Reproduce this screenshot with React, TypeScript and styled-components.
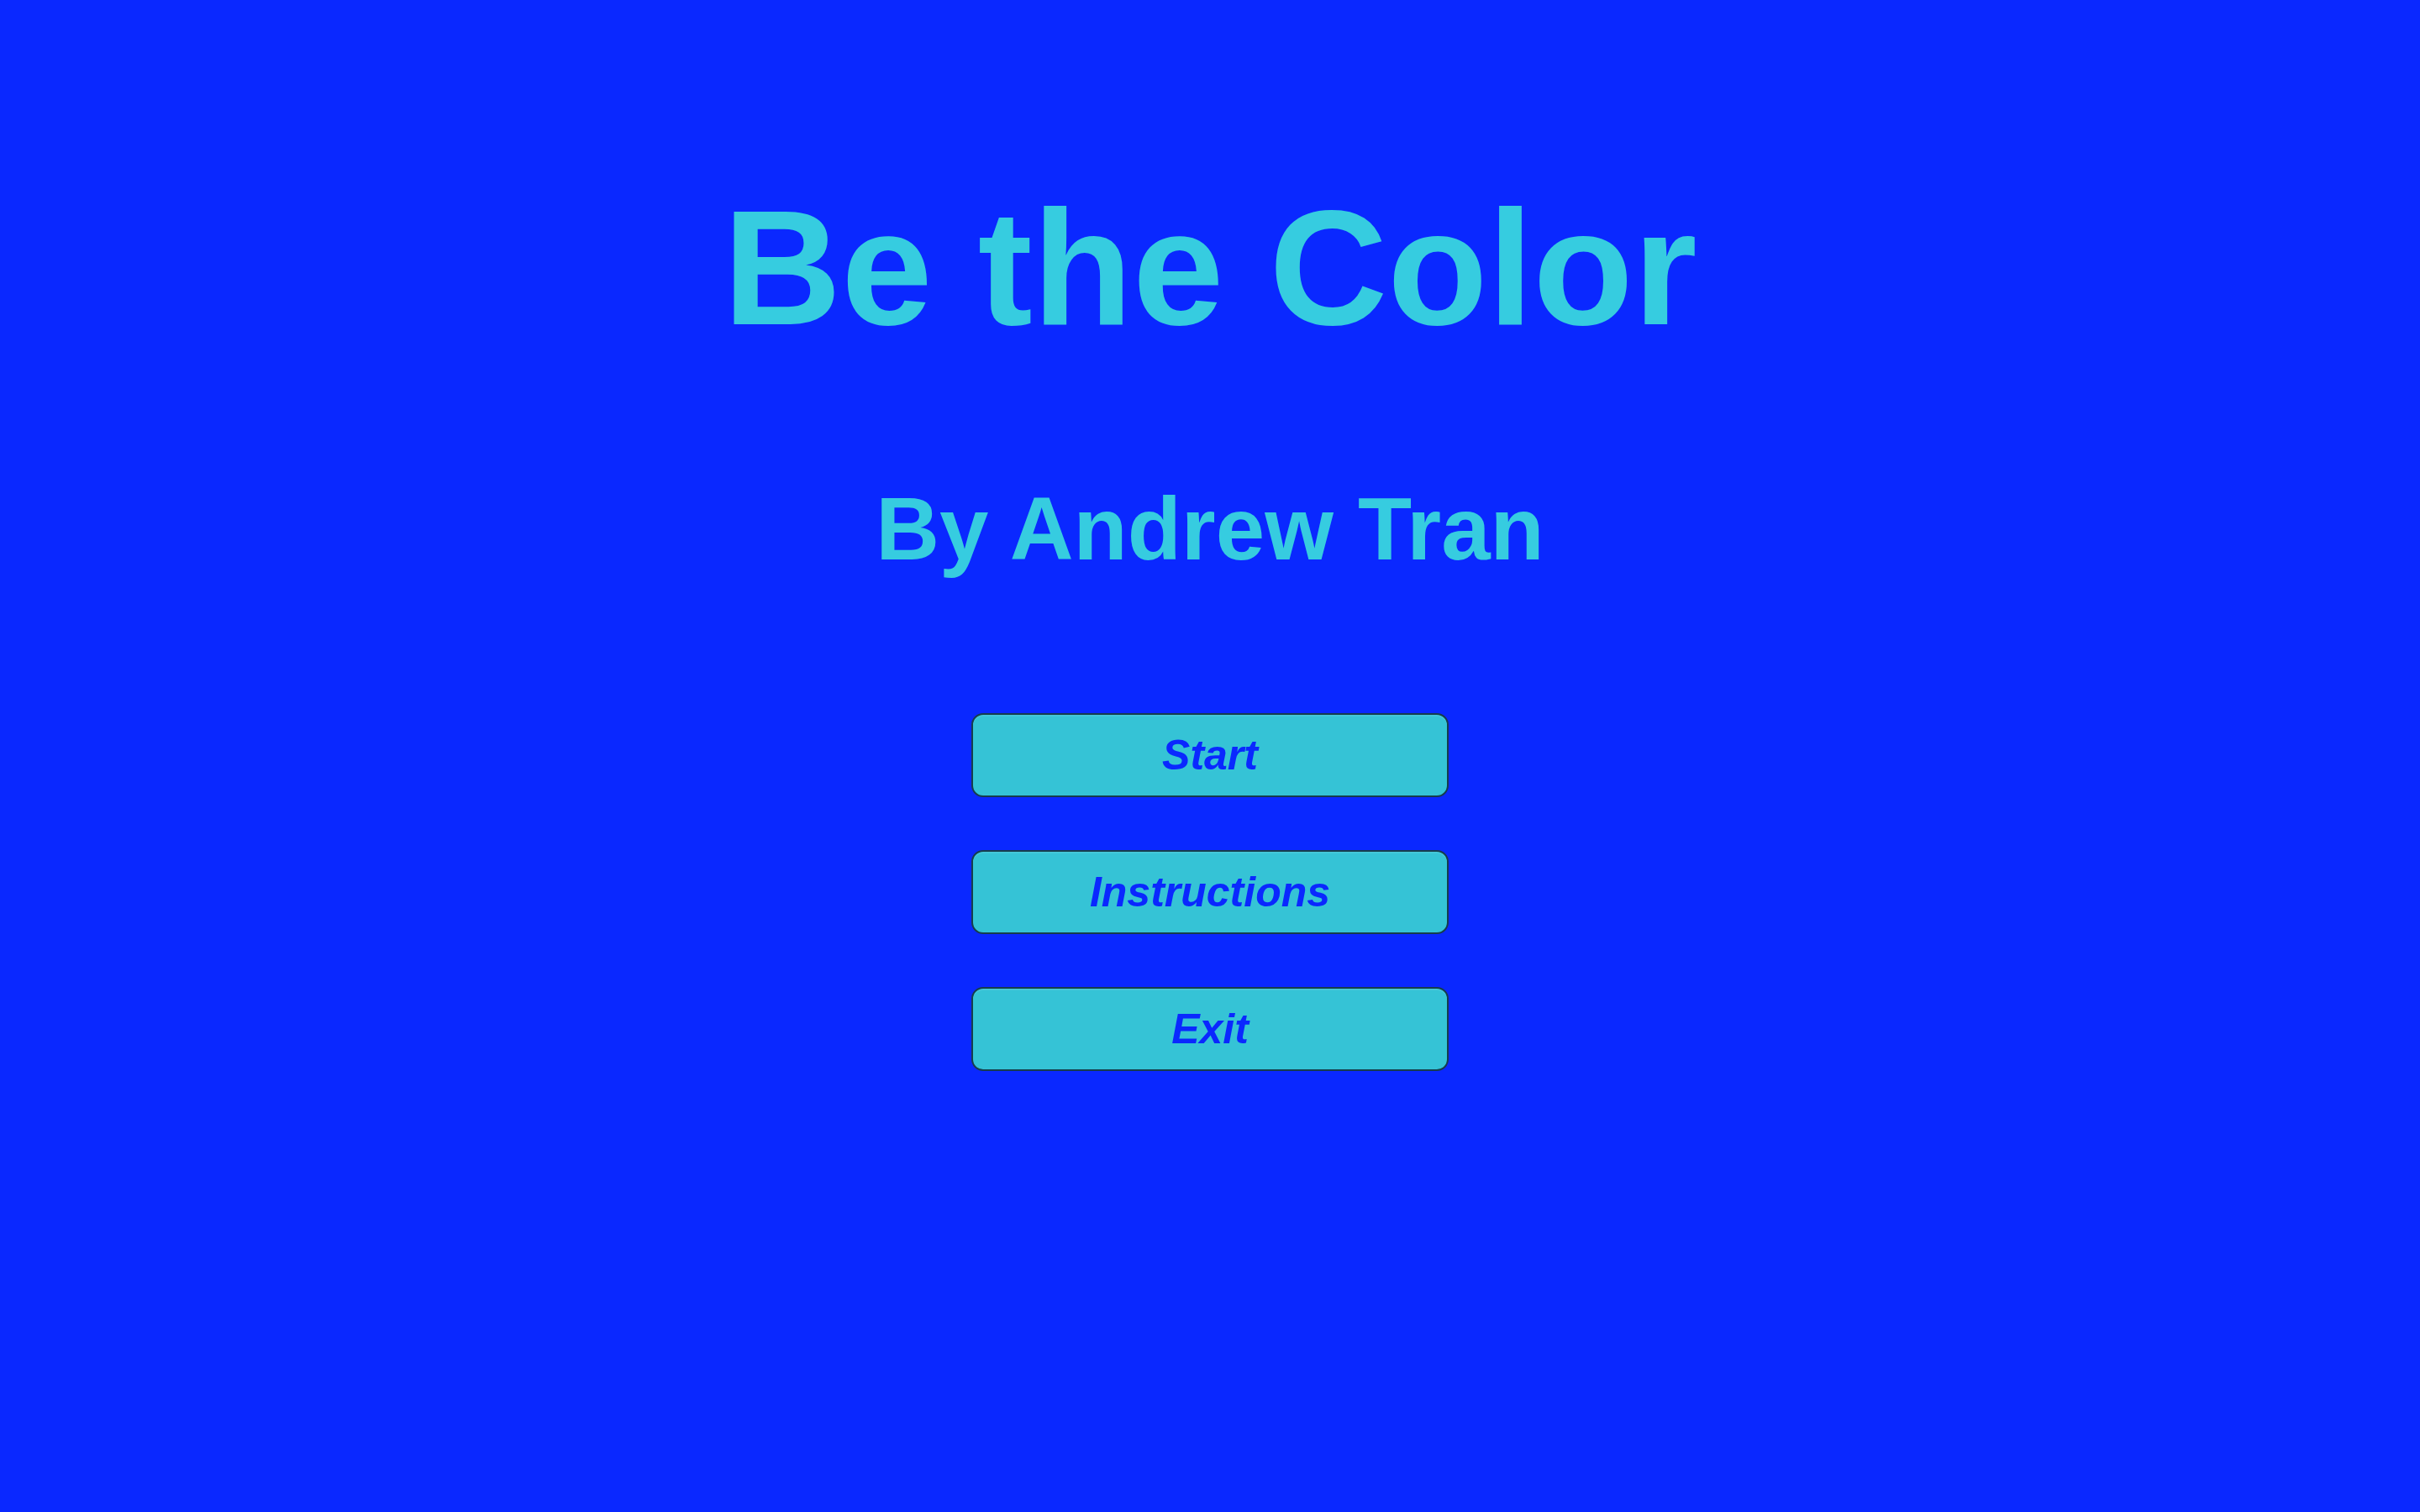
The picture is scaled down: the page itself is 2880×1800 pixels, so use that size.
import styled, { createGlobalStyle } from 'styled-components';

const GlobalStyle = createGlobalStyle`
  html, body {
    margin: 0;
    padding: 0;
    background: #0a28ff;
  }
  body {
    font-family: "Liberation Sans", Arial, sans-serif;
  }
`;

const Screen = styled.main`
  width: 100%;
  min-height: 100vh;
  background: #0a28ff;
  display: flex;
  flex-direction: column;
  align-items: center;
  padding-top: 221px;
  box-sizing: border-box;
`;

const Title = styled.h1`
  margin: 0 0 161px;
  font-size: 195px;
  line-height: 1;
  font-weight: 700;
  color: #36cce0;
  white-space: nowrap;
`;

const Subtitle = styled.h2`
  margin: 0 0 167px;
  font-size: 105px;
  line-height: 1;
  font-weight: 700;
  color: #36cce0;
  white-space: nowrap;
`;

const Menu = styled.nav`
  display: flex;
  flex-direction: column;
  gap: 63px;
`;

const MenuButton = styled.button`
  width: 568px;
  height: 100px;
  box-sizing: border-box;
  border: 2px solid #163d4c;
  border-radius: 14px;
  background: #35c3d6;
  box-shadow: inset 0 2px 0 rgba(255, 255, 255, 0.08);
  color: #0a28ff;
  font-family: "Liberation Sans", Arial, sans-serif;
  font-size: 50px;
  font-weight: 700;
  font-style: italic;
  line-height: 1;
  cursor: pointer;
  padding: 0;
`;

const items = ['Start', 'Instructions', 'Exit'];

export default function App() {
  return (
    <>
      <GlobalStyle />
      <Screen>
        <Title>Be the Color</Title>
        <Subtitle>By Andrew Tran</Subtitle>
        <Menu>
          {items.map((label) => (
            <MenuButton key={label}>{label}</MenuButton>
          ))}
        </Menu>
      </Screen>
    </>
  );
}
